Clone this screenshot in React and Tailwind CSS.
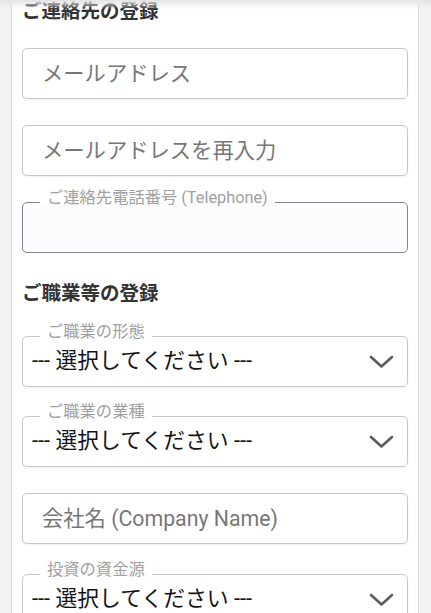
import React from "react";

const fields = [
  { kind: "heading", text: "ご連絡先の登録" },
  { kind: "input", placeholder: "メールアドレス", mt: "mt-[24px]" },
  { kind: "input", placeholder: "メールアドレスを再入力", mt: "mt-[26px]" },
  { kind: "tel", label: "ご連絡先電話番号 (Telephone)", mt: "mt-[26px]" },
  { kind: "heading", text: "ご職業等の登録", mt: "mt-[29px]" },
  { kind: "select", label: "ご職業の形態", mt: "mt-[30px]" },
  { kind: "select", label: "ご職業の業種", mt: "mt-[29px]" },
  { kind: "input", placeholder: "会社名 (Company Name)", mt: "mt-[26px]" },
  { kind: "select", label: "投資の資金源", mt: "mt-[30px]" },
];

function Chevron() {
  return (
    <svg width="25" height="14" viewBox="0 0 25 14" fill="none" aria-hidden="true">
      <polyline points="2,2 12.5,11.5 23,2" stroke="#5c5c5c" strokeWidth="2.6" strokeLinecap="round" strokeLinejoin="round" />
    </svg>
  );
}

function Notch({ children }) {
  // label sitting on the top border, like an outlined material field
  return (
    <span className="absolute left-[17px] -top-[12px] h-[12px] bg-white px-[7px] text-[16.3px] leading-[12px] text-[#a0a0a0] whitespace-nowrap">
      <span className="relative top-[1px]">{children}</span>
    </span>
  );
}

function Field({ f }) {
  if (f.kind === "heading") {
    return <h2 className={`${f.mt || ""} text-[19.5px] leading-[24px] font-bold text-[#333333]`}>{f.text}</h2>;
  }
  if (f.kind === "input") {
    return (
      <div className={`${f.mt} flex h-[51px] items-center rounded-[5px] border border-[#c9c9c9] bg-white pl-[19px] shadow-[0_1px_2px_rgba(0,0,0,0.07)]`}>
        <span className="text-[21.3px] text-[#777777]">{f.placeholder}</span>
      </div>
    );
  }
  if (f.kind === "tel") {
    return (
      <div className={`${f.mt} relative h-[51px] rounded-[5px] border-[1.5px] border-[#858296] bg-[#fcfbfe]`}>
        <Notch>{f.label}</Notch>
      </div>
    );
  }
  return (
    <div className={`${f.mt} relative flex h-[51px] items-center justify-between rounded-[5px] border border-[#c9c9c9] bg-white pl-[9px] pr-[13px] shadow-[0_1px_2px_rgba(0,0,0,0.07)]`}>
      <Notch>{f.label}</Notch>
      <span className="text-[21.8px] text-[#141414]">--- 選択してください ---</span>
      <Chevron />
    </div>
  );
}

export default function App() {
  return (
    <div className="relative h-[613px] overflow-hidden bg-[#f3f3f3] font-['Roboto','Noto_Sans_CJK_JP',sans-serif]">
      <div className="pointer-events-none absolute inset-x-0 top-0 z-10 h-[9px] bg-gradient-to-b from-[#e4e4e4] to-transparent" />
      <div className="ml-[11px] min-h-full w-[408px] border-x border-[#dadada] bg-white px-[10px]">
        <div className="flex flex-col">
          {fields.map((f, i) => (
            <Field key={i} f={f} />
          ))}
        </div>
      </div>
    </div>
  );
}
